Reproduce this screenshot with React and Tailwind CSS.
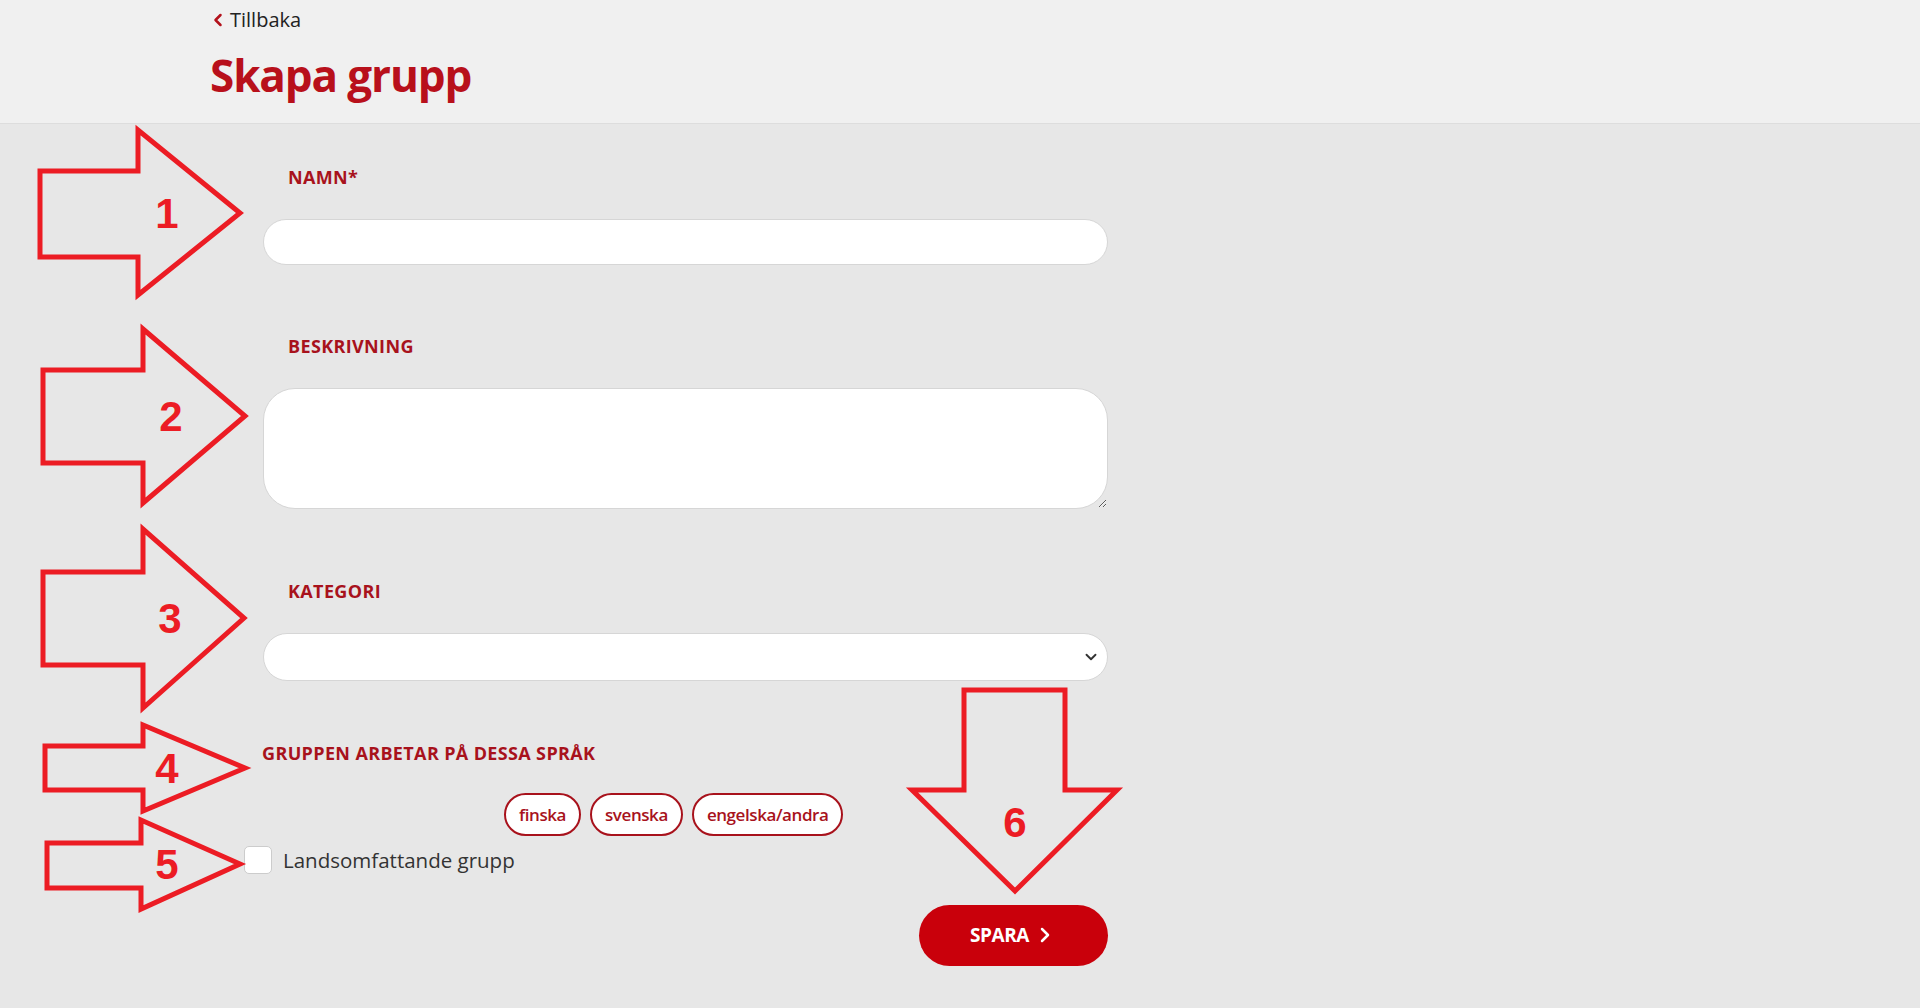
import { ChevronLeft, ChevronDown, ChevronRight } from 'lucide-react';

const FONT = 'font-["Open_Sans","Noto_Sans",sans-serif]';

// annotation arrows drawn on top of the screenshot
const RIGHT_ARROWS = [
  { n: '1', left: 40, top: 171, bottom: 257, head: 138, headTop: 130, headBottom: 295, tip: 240, mid: 213, tx: 167 },
  { n: '2', left: 43, top: 370, bottom: 463, head: 143, headTop: 329, headBottom: 503, tip: 245, mid: 416, tx: 171 },
  { n: '3', left: 43, top: 572, bottom: 665, head: 143, headTop: 529, headBottom: 708, tip: 244, mid: 618, tx: 170 },
  { n: '4', left: 45, top: 746, bottom: 790, head: 143, headTop: 725, headBottom: 811, tip: 245, mid: 768, tx: 167 },
  { n: '5', left: 47, top: 843, bottom: 888, head: 141, headTop: 820, headBottom: 909, tip: 240, mid: 864, tx: 167 },
];

const Arrows = () => (
  <svg className="absolute left-0 top-0 pointer-events-none" width="1920" height="1008" viewBox="0 0 1920 1008">
    {RIGHT_ARROWS.map((a) => (
      <g key={a.n}>
        <polygon
          points={`${a.left},${a.top} ${a.head},${a.top} ${a.head},${a.headTop} ${a.tip},${a.mid} ${a.head},${a.headBottom} ${a.head},${a.bottom} ${a.left},${a.bottom}`}
          fill="none"
          stroke="#ec1c24"
          strokeWidth="5"
          strokeLinejoin="miter"
        />
        <text x={a.tx} y={a.mid + 15} textAnchor="middle" fontFamily="Liberation Sans, Arial, sans-serif" fontWeight="900" fontSize="42" fill="#ec1c24">
          {a.n}
        </text>
      </g>
    ))}
    <polygon
      points="964,690 1065,690 1065,790 1117,790 1015,891 912,790 964,790"
      fill="none"
      stroke="#ec1c24"
      strokeWidth="5"
    />
    <text x="1015" y="837" textAnchor="middle" fontFamily="Liberation Sans, Arial, sans-serif" fontWeight="900" fontSize="42" fill="#ec1c24">
      6
    </text>
  </svg>
);

const Label = ({ children, className = '' }) => (
  <p className={`text-[18px] leading-5 font-bold uppercase tracking-[0.02em] text-[#a8121c] ${className}`}>{children}</p>
);

const LANGUAGES = ['finska', 'svenska', 'engelska/andra'];

export default function App() {
  return (
    <div className={`relative min-h-screen w-full bg-[#e7e7e7] ${FONT}`}>
      <header className="bg-[#f0f0f0] border-b border-[#dddddd] pt-2 pb-6 pl-[210px]">
        <a className="flex items-center h-6 text-[20px] text-[#222]">
          <ChevronLeft className="w-5 h-5 text-[#b3111b] -ml-[2px]" strokeWidth={3} />
          <span className="ml-[2px]">Tillbaka</span>
        </a>
        <h1 className="mt-[19px] text-[44px] leading-[48px] font-bold text-[#b8101b] tracking-tight">Skapa grupp</h1>
      </header>

      <main className="w-[845px] ml-[263px] pt-[43px]">
        <Label className="pl-[25px]">Namn*</Label>
        <input className="mt-8 w-full h-[46px] rounded-full bg-white border border-[#d6d6d6] px-6 outline-none" />

        <Label className="pl-[25px] mt-[71px]">Beskrivning</Label>
        <textarea className="mt-8 w-full h-[121px] rounded-[32px] bg-white border border-[#d6d6d6] px-6 py-3 outline-none block" />

        <Label className="pl-[25px] mt-[72px]">Kategori</Label>
        <div className="relative mt-8">
          <select className="w-full h-[48px] rounded-full bg-white border border-[#d6d6d6] px-6 outline-none appearance-none" />
          <ChevronDown className="absolute right-[8px] top-[15px] w-[18px] h-[18px] text-[#333]" strokeWidth={2.5} />
        </div>

        <Label className="mt-[62px] -ml-[1px]">Gruppen arbetar på dessa språk</Label>
        <div className="flex gap-[9px] mt-[30px] pl-[241px]">
          {LANGUAGES.map((lang) => (
            <button
              key={lang}
              className="h-[43px] px-[13px] rounded-full bg-white border-2 border-[#a8121c] text-[17px] text-[#a8121c] font-semibold tracking-tight"
            >
              {lang}
            </button>
          ))}
        </div>

        <label className="flex items-center mt-[9px] -ml-[19px]">
          <span className="w-[28px] h-[28px] rounded-[5px] bg-white border border-[#cccccc]" />
          <span className="ml-[11px] text-[20.5px] text-[#333]">Landsomfattande grupp</span>
        </label>

        <div className="flex justify-end mt-[29px]">
          <button className="flex items-center justify-center gap-1 w-[189px] h-[61px] rounded-full bg-[#c9000b] text-white text-[19px] font-bold tracking-tight">
            SPARA
            <ChevronRight className="w-6 h-6" strokeWidth={2.5} />
          </button>
        </div>
      </main>

      <Arrows />
    </div>
  );
}
